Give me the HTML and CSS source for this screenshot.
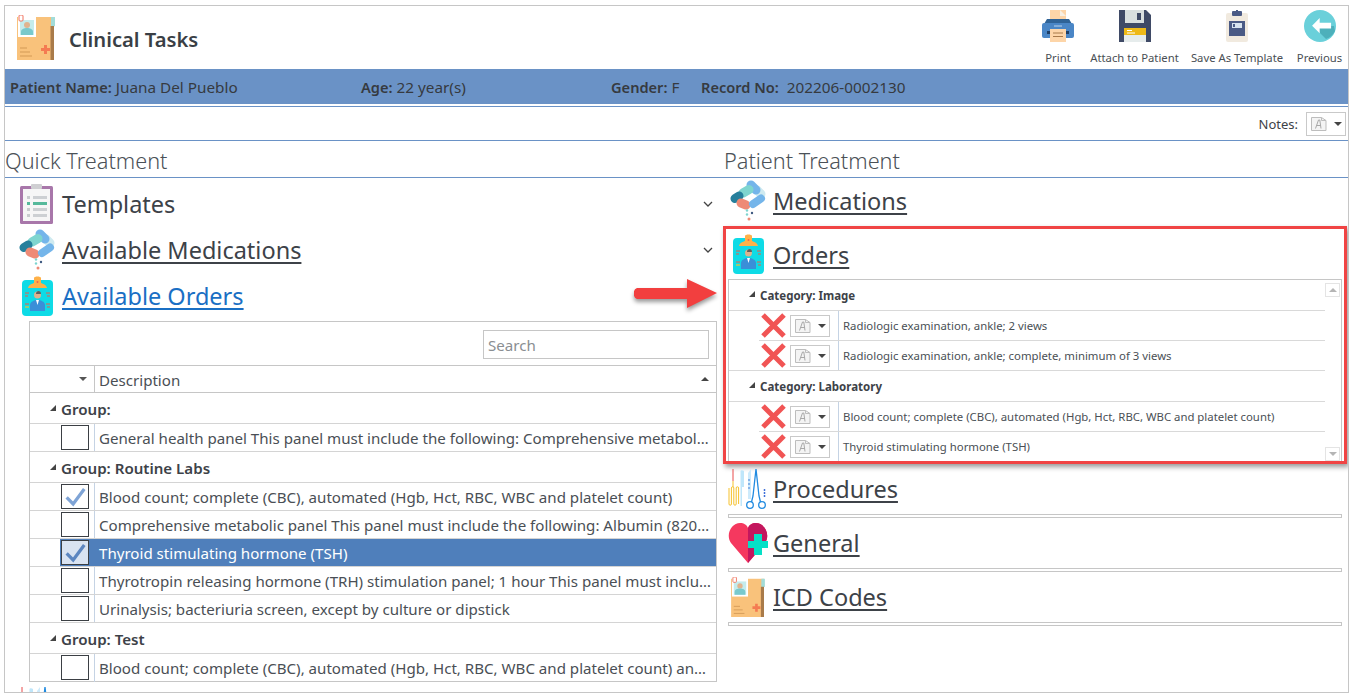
FILE: index.html
```html
<!DOCTYPE html>
<html lang="en">
<head>
<meta charset="utf-8">
<title>Clinical Tasks</title>
<link rel="stylesheet" href="styles.css">
</head>
<body>
<svg class="defs" aria-hidden="true">
  <symbol id="i-folder" viewBox="0 0 38 45">
    <rect x="0" y="2" width="37" height="43" fill="#f9c27b"/>
    <path d="M34 2h4l0 9-4 2z" fill="#a3dcd8"/>
    <rect x="33.500" y="11" width="3.500" height="34" fill="#a97b4a"/>
    <rect x="1" y="1" width="18" height="21" fill="#fff"/>
    <rect x="3" y="5" width="14" height="15" fill="#c5ecec"/>
    <circle cx="10" cy="10" r="3" fill="#e0b48f"/>
    <path d="M4 20v-3c0-3 3-4 6-4s6 1 6 4v3z" fill="#79c9cc"/>
    <rect x="2" y="0" width="4" height="6" rx="1" fill="#fff" stroke="#f0725f" stroke-width="1"/>
    <path d="M24 33h3v-3h3v3h3v3h-3v3h-3v-3h-3z" fill="#f47b52"/>
    <path d="M3 33h7M3 37h10M3 41h12" stroke="#d39a57" stroke-width="1"/>
  </symbol>
  <symbol id="i-print" viewBox="0 0 32 32">
    <rect x="8" y="0" width="16" height="12" fill="#fdd5a8"/>
    <path d="M18 0l6 6h-6z" fill="#f7efe3"/>
    <path d="M5 9h22l3 5H2z" fill="#2f6397"/>
    <rect x="0" y="13" width="32" height="15" rx="2" fill="#4a86c6"/>
    <rect x="5" y="21" width="22" height="3" fill="#1f3f66"/>
    <rect x="8" y="19" width="16" height="13" fill="#fdd5a8"/>
    <path d="M11 23h10M11 26.500h10" stroke="#a87a4a" stroke-width="1"/>
    <path d="M12 16h8" stroke="#bcd5ee" stroke-width="1"/>
  </symbol>
  <symbol id="i-save" viewBox="0 0 32 32">
    <path d="M0 0h27l5 5v27H0z" fill="#3f4a66"/>
    <rect x="6" y="0" width="19" height="13" fill="#d9dfdf"/>
    <rect x="18" y="3" width="4" height="7" fill="#3f4a66"/>
    <rect x="5" y="18" width="22" height="14" fill="#e6ecec"/>
    <rect x="5" y="18" width="22" height="7" fill="#eeb917"/>
    <path d="M8 20.500h5M8 23h8" stroke="#fff" stroke-width="1"/>
  </symbol>
  <symbol id="i-tpl" viewBox="0 0 32 32">
    <rect x="5" y="3" width="22" height="29" rx="2" fill="#f1eadf"/>
    <path d="M12 5v-2h3v-3h2v3h3v2z" fill="#4a5a85"/>
    <rect x="11" y="1" width="10" height="5" rx="1" fill="#4a5a85"/>
    <rect x="8" y="11" width="16" height="15" fill="#4a5a85"/>
    <rect x="11" y="13" width="10" height="5" fill="#d7e3ef"/>
    <rect x="12" y="14" width="2" height="3" fill="#4a5a85"/>
  </symbol>
  <symbol id="i-prev" viewBox="0 0 32 32">
    <circle cx="16" cy="16" r="16" fill="#6ad0da"/>
    <path d="M9 16L22 29A16 16 0 0 0 31 21L30 16z" fill="#4db0bb"/>
    <path d="M16 8l-8 8 8 8v-5h12v-6H16z" fill="#fff" transform="scale(.95) translate(.5 .5)"/>
  </symbol>
  <symbol id="i-templates" viewBox="0 0 33 40">
    <rect x="0" y="2" width="33" height="38" rx="1.500" fill="#a877aa"/>
    <rect x="3" y="5" width="27" height="32" fill="#f6f6f6"/>
    <rect x="11" y="0" width="11" height="5" rx="1" fill="#cfcfd2"/>
    <path d="M7 12h3v3H7zM7 24h3v3H7zM7 30h3v3H7z" fill="#c9cccf"/>
    <path d="M13 12h14v3H13zM13 24h14v3H13zM13 30h14v3H13z" fill="#cdd0d3"/>
    <path d="M7 18h3v3H7zM13 18h14v3H13z" fill="#56b99b"/>
  </symbol>
  <symbol id="i-pills" viewBox="0 0 36 42">
    <path d="M27 10L31 14" stroke="#cfeaf0" stroke-width="9" stroke-linecap="round"/>
    <path d="M21 5L26 10" stroke="#74b5ea" stroke-width="9" stroke-linecap="round"/>
    <path d="M13 13L19 9.500" stroke="#7ed5cf" stroke-width="9" stroke-linecap="round"/>
    <path d="M5 18.500L9 16" stroke="#267f9c" stroke-width="9" stroke-linecap="round"/>
    <path d="M11 23L16 25" stroke="#ee8a76" stroke-width="9" stroke-linecap="round"/>
    <path d="M23 24L31 18.500" stroke="#74b5ea" stroke-width="8" stroke-linecap="round"/>
    <circle cx="17" cy="30.500" r="1.200" fill="#7ed5cf"/><circle cx="22" cy="33" r="1.200" fill="#3f5a80"/>
    <circle cx="17" cy="34.500" r="1.200" fill="#7ed5cf"/><circle cx="19" cy="39" r="1.500" fill="#ee8a76"/>
  </symbol>
  <symbol id="i-orders" viewBox="0 0 31 40">
    <rect x="0" y="4" width="31" height="36" rx="4" fill="#0edbe6"/>
    <path d="M6 12c1-4 4-4 6-5V2c0-2 7-2 7 0v5c2 1 5 1 6 5z" fill="#ffb148"/>
    <circle cx="15.500" cy="6" r="1" fill="#f0634f"/>
    <circle cx="15.500" cy="19" r="3.500" fill="#dfb28e"/>
    <path d="M14 18a3 3 0 0 1 3-3 3 3 0 0 1 2 3z" fill="#5f5f5f"/>
    <path d="M8 35v-6c0-3 4-5 7.500-5s7.500 2 7.500 5v6z" fill="#3a8fd8"/>
    <path d="M14 24h3l-1.500 5z" fill="#fff"/>
    <path d="M3 17h4M3 20h3M24 17h4M25 20h3M3 28h4M24 28h4M25 31h3" stroke="#ef5b46" stroke-width="1.200"/>
    <path d="M3 31h4" stroke="#f3c22e" stroke-width="1.200"/>
  </symbol>
  <symbol id="i-proc" viewBox="0 0 40 40">
    <path d="M5 0v12" stroke="#e84b4b" stroke-width="1"/>
    <path d="M5 12v6M1 19v16a1.200 1.200 0 0 0 2.400 0V19a1.200 1.200 0 0 1 2.400 0v16a1.200 1.200 0 0 0 2.400 0V19a1.200 1.200 0 0 1 2.400 0v16" fill="none" stroke="#f6c12c" stroke-width="1"/>
    <path d="M12.500 2c0-1 2.500-1 3.500 0l0 16h-2l0 19h-1.500z" fill="#bfe6fa"/>
    <path d="M20 4l3-4 0 30h-3z" fill="#cdeafb"/>
    <path d="M21 10v12" stroke="#3f7fd8" stroke-width="1" stroke-dasharray="2 2"/>
    <path d="M28 0L25 27L23.500 33M28 0L31 27L32.500 33" stroke="#1f8ae0" stroke-width="1.300" fill="none"/>
    <circle cx="22" cy="36" r="3.300" fill="none" stroke="#1f8ae0" stroke-width="1.300"/>
    <circle cx="34" cy="36" r="3.300" fill="none" stroke="#1f8ae0" stroke-width="1.300"/>
    <path d="M36.500 20v8" stroke="#3f6fd8" stroke-width="1.500" stroke-dasharray="2 1"/>
  </symbol>
  <symbol id="i-heart" viewBox="0 0 40 40">
    <path d="M20 40L3 20C-3 11 4 0 12 0c4 0 7 2 8 5 1-3 4-5 8-5 8 0 15 11 9 20z" fill="#f5385f"/>
    <path d="M20 40V5c1-3 4-5 8-5 8 0 15 11 9 20z" fill="#c3175e"/>
    <path d="M26 11h8v7h6v7h-6v7h-8v-7h-6v-7h6z" fill="#06e0c6"/>
  </symbol>
  <symbol id="i-note" viewBox="0 0 16 14">
    <path d="M.5.500h10l4.500 3v10H.5z" fill="#f4f4f4" stroke="#bdbdbd"/>
    <path d="M10.500.500v3H15" fill="none" stroke="#bdbdbd"/>
    <path d="M4.500 11.500L7.500 3h1.300l1.200 8.500M5.800 8.500h4" fill="none" stroke="#a8a8a8"/>
  </symbol>
</svg>

<div class="frame">
  <header class="top">
    <svg class="logo"><use href="#i-folder"/></svg>
    <h1 class="title">Clinical Tasks</h1>
    <nav class="tools">
      <div class="tool tool-print"><svg class="tool-ic"><use href="#i-print"/></svg><span>Print</span></div>
      <div class="tool tool-attach"><svg class="tool-ic"><use href="#i-save"/></svg><span>Attach to Patient</span></div>
      <div class="tool tool-tpl"><svg class="tool-ic"><use href="#i-tpl"/></svg><span>Save As Template</span></div>
      <div class="tool tool-prev"><svg class="tool-ic"><use href="#i-prev"/></svg><span>Previous</span></div>
    </nav>
  </header>

  <div class="patient">
    <div class="pf pf-name"><b>Patient Name:</b> Juana Del Pueblo</div>
    <div class="pf pf-age"><b>Age:</b> 22 year(s)</div>
    <div class="pf pf-gender"><b>Gender:</b> F</div>
    <div class="pf pf-rec"><b>Record No:</b>&nbsp; 202206-0002130</div>
  </div>

  <div class="notes">
    <span>Notes:</span>
    <div class="notebtn notebtn-top"><svg class="note-ic"><use href="#i-note"/></svg><i class="caret"></i></div>
  </div>

  <div class="titles">
    <div class="ttl ttl-l">Quick Treatment</div>
    <div class="ttl">Patient Treatment</div>
  </div>

  <main class="cols">
    <section class="left">
      <div class="lhead">
        <svg class="ic-templates"><use href="#i-templates"/></svg>
        <span class="htext plain">Templates</span>
        <svg class="chev" viewBox="0 0 10 6"><path d="M1 1l4 4 4-4" fill="none" stroke="#444" stroke-width="1.300"/></svg>
      </div>
      <div class="lhead">
        <svg class="ic-pills-l"><use href="#i-pills"/></svg>
        <a class="htext">Available Medications</a>
        <svg class="chev" viewBox="0 0 10 6"><path d="M1 1l4 4 4-4" fill="none" stroke="#444" stroke-width="1.300"/></svg>
      </div>
      <div class="lhead">
        <svg class="ic-orders-l"><use href="#i-orders"/></svg>
        <a class="htext blue">Available Orders</a>
      </div>

      <div class="panel">
        <div class="searchrow"><div class="search">Search</div></div>
        <div class="colhead">
          <div class="col-a"><i class="caret"></i></div>
          <div class="col-b">Description<i class="caret-up"></i></div>
        </div>
        <div class="grp"><i class="tri"></i>Group:</div>
        <div class="item">
          <div class="cell-a"><span class="cb"></span></div>
          <div class="cell-b">General health panel This panel must include the following: Comprehensive metabolic panel (80053) Blood count</div>
        </div>
        <div class="grp"><i class="tri"></i>Group: Routine Labs</div>
        <div class="item">
          <div class="cell-a"><span class="cb"><svg viewBox="0 0 28 24" class="tick"><path d="M5 13l7 7L24 4" fill="none" stroke="#7fa4d6" stroke-width="3.500"/></svg></span></div>
          <div class="cell-b">Blood count; complete (CBC), automated (Hgb, Hct, RBC, WBC and platelet count)</div>
        </div>
        <div class="item">
          <div class="cell-a"><span class="cb"></span></div>
          <div class="cell-b">Comprehensive metabolic panel This panel must include the following: Albumin (82040) Bilirubin total</div>
        </div>
        <div class="item sel">
          <div class="cell-a"><span class="cb"><svg viewBox="0 0 28 24" class="tick"><path d="M5 13l7 7L24 4" fill="none" stroke="#5c86c0" stroke-width="3.500"/></svg></span></div>
          <div class="cell-b">Thyroid stimulating hormone (TSH)</div>
        </div>
        <div class="item">
          <div class="cell-a"><span class="cb"></span></div>
          <div class="cell-b">Thyrotropin releasing hormone (TRH) stimulation panel; 1 hour This panel must include the following tests</div>
        </div>
        <div class="item">
          <div class="cell-a"><span class="cb"></span></div>
          <div class="cell-b">Urinalysis; bacteriuria screen, except by culture or dipstick</div>
        </div>
        <div class="grp"><i class="tri"></i>Group: Test</div>
        <div class="item last">
          <div class="cell-a"><span class="cb"></span></div>
          <div class="cell-b">Blood count; complete (CBC), automated (Hgb, Hct, RBC, WBC and platelet count) and automated differential</div>
        </div>
      </div>
      <svg class="ic-proc-cut"><use href="#i-proc"/></svg>
    </section>

    <section class="right">
      <div class="rhead rhead-med">
        <svg class="ic-pills-r"><use href="#i-pills"/></svg>
        <a class="htext">Medications</a>
      </div>
      <div class="redbox">
        <div class="rhead-orders">
          <svg class="ic-orders-r"><use href="#i-orders"/></svg>
          <a class="htext">Orders</a>
        </div>
        <div class="rgrid">
          <div class="rlist">
            <div class="cat"><i class="tri"></i>Category: Image</div>
            <div class="ritem">
              <svg class="xmark" viewBox="0 0 25 25"><path d="M2 2l21 21M23 2L2 23" stroke="#f15454" stroke-width="5"/></svg>
              <div class="notebtn notebtn-row"><svg class="note-ic"><use href="#i-note"/></svg><i class="caret"></i></div>
              <div class="rtext">Radiologic examination, ankle; 2 views</div>
            </div>
            <div class="ritem end">
              <svg class="xmark" viewBox="0 0 25 25"><path d="M2 2l21 21M23 2L2 23" stroke="#f15454" stroke-width="5"/></svg>
              <div class="notebtn notebtn-row"><svg class="note-ic"><use href="#i-note"/></svg><i class="caret"></i></div>
              <div class="rtext">Radiologic examination, ankle; complete, minimum of 3 views</div>
            </div>
            <div class="cat"><i class="tri"></i>Category: Laboratory</div>
            <div class="ritem">
              <svg class="xmark" viewBox="0 0 25 25"><path d="M2 2l21 21M23 2L2 23" stroke="#f15454" stroke-width="5"/></svg>
              <div class="notebtn notebtn-row"><svg class="note-ic"><use href="#i-note"/></svg><i class="caret"></i></div>
              <div class="rtext">Blood count; complete (CBC), automated (Hgb, Hct, RBC, WBC and platelet count)</div>
            </div>
            <div class="ritem end">
              <svg class="xmark" viewBox="0 0 25 25"><path d="M2 2l21 21M23 2L2 23" stroke="#f15454" stroke-width="5"/></svg>
              <div class="notebtn notebtn-row"><svg class="note-ic"><use href="#i-note"/></svg><i class="caret"></i></div>
              <div class="rtext">Thyroid stimulating hormone (TSH)</div>
            </div>
          </div>
          <div class="scroll">
            <div class="sbtn"><i class="sup"></i></div>
            <div class="sbtn"><i class="sdown"></i></div>
          </div>
        </div>
      </div>
      <div class="rsec">
        <div class="rrow"><svg class="ic-40"><use href="#i-proc"/></svg><a class="htext">Procedures</a></div>
        <div class="rule"></div>
      </div>
      <div class="rsec">
        <div class="rrow"><svg class="ic-40"><use href="#i-heart"/></svg><a class="htext">General</a></div>
        <div class="rule"></div>
      </div>
      <div class="rsec">
        <div class="rrow"><svg class="ic-folder"><use href="#i-folder"/></svg><a class="htext">ICD Codes</a></div>
        <div class="rule"></div>
      </div>
    </section>
  </main>

  <svg class="arrow" viewBox="0 0 84 32">
    <path d="M3 10h50V1l30 14-30 15v-9H3a5 5 0 0 1-3-5.500A5 5 0 0 1 3 10z" fill="#f23f3f"/>
  </svg>
</div>
</body>
</html>
```

FILE: styles.css
```css
* { box-sizing: border-box; }
html, body { margin: 0; padding: 0; background: #fff; }
body { font-family: "Noto Sans", "Open Sans", sans-serif; color: #3d4248; width: 1351px; height: 698px; overflow: hidden; }
.defs { position: absolute; width: 0; height: 0; }

.frame { position: relative; margin: 5px 0 0 4px; width: 1345px; height: 688px; border: 1px solid #c6c6c6; overflow: hidden; }

.top { height: 63px; display: flex; align-items: flex-start; position: relative; }
.logo { width: 38px; height: 45px; margin: 9px 0 0 12px; flex: none; }
.title { margin: 17px 0 0 14px; font-size: 20.200px; line-height: 32px; font-weight: 600; color: #3a3f45; }
.tools { margin-left: auto; height: 100%; display: flex; }
.tool { display: flex; flex-direction: column; align-items: center; font-size: 11.300px; line-height: 16px; color: #4a4f55; }
.tool-ic { width: 32px; height: 32px; margin: 4px 0 8px; }
.tool span { white-space: nowrap; }
.tool-print { width: 60px; }
.tool-attach { width: 93px; }
.tool-tpl { width: 112px; }
.tool-prev { width: 53px; margin-right: 2px; }

.patient { height: 35px; background: #6a92c6; display: flex; align-items: center; font-size: 15.300px; color: #363a40; }
.patient b { font-weight: 600; font-size: 14.600px; }
.pf { white-space: nowrap; }
.pf-name { margin-left: 5px; width: 351px; }
.pf-age { width: 250px; }
.pf-gender { width: 90px; }

.notes { margin-top: 2px; height: 35px; border-top: 1px solid #6a92c6; border-bottom: 1px solid #6a92c6; display: flex; align-items: center; justify-content: flex-end; padding-right: 2px; font-size: 13px; gap: 8px; }
.notebtn { border: 1px solid #c9c9c9; display: flex; align-items: center; background: #fff; }
.notebtn-top { width: 40px; height: 24px; padding-left: 4px; }
.notebtn-row { width: 40px; height: 22px; padding-left: 4px; margin-left: 4px; flex: none; }
.note-ic { width: 16px; height: 14px; }
.caret { display: inline-block; width: 0; height: 0; border-left: 4px solid transparent; border-right: 4px solid transparent; border-top: 4px solid #444; margin-left: 7px; }

.titles { height: 37px; border-bottom: 1px solid #6a92c6; display: flex; font-size: 21.700px; line-height: 40px; font-weight: 300; color: #4b5157; }
.ttl { white-space: nowrap; }
.ttl-l { width: 719px; }

.cols { display: flex; align-items: flex-start; }
.left { width: 718px; flex: none; padding-top: 3px; }
.right { width: 624px; flex: none; }

.htext { font-size: 23.500px; line-height: 34px; color: #3d4248; text-decoration: underline; text-underline-offset: 3px; white-space: nowrap; }
.htext.plain { text-decoration: none; }
.htext.blue { color: #1a6fc4; }

.lhead { height: 46px; display: flex; align-items: center; position: relative; }
.ic-templates { width: 33px; height: 40px; margin-left: 15px; margin-right: 9px; flex: none; }
.ic-pills-l { width: 36px; height: 42px; margin-left: 14px; margin-right: 7px; flex: none; }
.ic-orders-l { width: 31px; height: 40px; margin-left: 17px; margin-right: 9px; flex: none; }
.chev { position: absolute; right: 10px; top: 20px; width: 10px; height: 6px; }

.panel { margin: 2px 0 0 24px; width: 688px; height: 361px; border: 1px solid #c6c6c6; font-size: 15.100px; color: #4a4f55; }
.searchrow { height: 44px; border-bottom: 1px solid #c6c6c6; padding: 8px 7px 0 0; display: flex; justify-content: flex-end; }
.search { width: 226px; height: 29px; border: 1px solid #c6c6c6; padding-left: 4px; line-height: 28px; color: #8a8e92; }
.colhead { height: 27px; border-bottom: 1px solid #c6c6c6; display: flex; }
.col-a { width: 65px; border-right: 1px solid #c6c6c6; display: flex; align-items: center; justify-content: flex-end; padding-right: 7px; }
.col-a .caret { border-top-color: #555; }
.col-b { flex: 1; padding: 1px 0 0 4px; line-height: 27px; position: relative; }
.caret-up { position: absolute; right: 7px; top: 11px; width: 0; height: 0; border-left: 4px solid transparent; border-right: 4px solid transparent; border-bottom: 4px solid #444; }

.grp { height: 31px; border-bottom: 1px solid #d4d4d4; font-weight: 600; display: flex; align-items: center; padding: 1px 0 0 20px; color: #3d4248; }
.tri { width: 0; height: 0; border-left: 6px solid transparent; border-bottom: 6px solid #444; margin: -2px 5px 0 0; flex: none; }
.item { height: 28px; border-bottom: 1px solid #d4d4d4; display: flex; }
.item.last { border-bottom: 0; }
.cell-a { width: 65px; flex: none; border-right: 1px solid #c5d3e4; padding: 1px 0 0 31px; }
.cb { display: block; width: 28px; height: 25px; border: 1px solid #3b3f44; background: #fff; }
.tick { display: block; width: 26px; height: 23px; }
.cell-b { flex: 1; min-width: 0; padding: 1px 4px 0; line-height: 27px; white-space: nowrap; overflow: hidden; text-overflow: ellipsis; }
.sel { background: linear-gradient(to right, #fff 30px, #4f7fbb 30px); color: #fff; }
.sel .cb { background: #d9e3f1; }
.sel .cell-a { border-right-color: #4f7fbb; }

.ic-proc-cut { display: block; width: 40px; height: 40px; margin: 5px 0 0 12px; }

.rhead-med { height: 48px; display: flex; align-items: center; padding: 0 0 2px 7px; }
.ic-pills-r { width: 36px; height: 42px; margin-right: 7px; flex: none; }
.redbox { height: 238px; width: 624px; border: 3px solid #f04444; box-shadow: 2px 3px 5px rgba(0, 0, 0, .4); position: relative; background: #fff; overflow: hidden; }
.rhead-orders { height: 50px; display: flex; align-items: center; padding-left: 7px; }
.rhead-orders .htext { margin-top: 2px; }
.ic-orders-r { width: 31px; height: 40px; margin-right: 9px; flex: none; }
.rgrid { margin-left: 2px; width: 614px; height: 182px; border: 1px solid #c6c6c6; border-bottom: 0; display: flex; font-size: 11.370px; color: #4a4f55; }
.rlist { width: 596px; flex: none; }
.cat { height: 31px; border-bottom: 1px solid #d9d9d9; font-weight: 700; display: flex; align-items: center; padding-left: 20px; font-size: 11.500px; color: #3d4248; }
.ritem { height: 30px; margin-left: 30px; border-bottom: 1px solid #d9d9d9; display: flex; align-items: center; }
.ritem.end { margin-left: 0; padding-left: 30px; }
.xmark { width: 25px; height: 25px; margin-left: 2px; flex: none; }
.rtext { margin-left: 8px; border-left: 1px solid #c5d3e4; height: 100%; padding-left: 4px; line-height: 29px; white-space: nowrap; }
.scroll { flex: 1; display: flex; flex-direction: column; justify-content: space-between; padding: 3px 1px 0 0; align-items: flex-end; }
.sbtn { width: 15px; height: 14px; border: 1px solid #e4e4e4; display: flex; align-items: center; justify-content: center; }
.sup { width: 0; height: 0; border-left: 4px solid transparent; border-right: 4px solid transparent; border-bottom: 4px solid #b5b5b5; }
.sdown { width: 0; height: 0; border-left: 4px solid transparent; border-right: 4px solid transparent; border-top: 4px solid #b5b5b5; }

.rsec { height: 54px; padding-left: 5px; padding-right: 5px; position: relative; }
.rrow { height: 50px; display: flex; align-items: center; }
.ic-40 { width: 40px; height: 40px; margin-right: 5px; flex: none; }
.ic-folder { width: 34px; height: 40px; margin: 0 8px 0 3px; flex: none; }
.rule { height: 4px; border: 1px solid #c6c6c6; }

.arrow { position: absolute; left: 629px; top: 272px; width: 84px; height: 32px; filter: drop-shadow(0 3px 2px rgba(0, 0, 0, .4)); }
```
